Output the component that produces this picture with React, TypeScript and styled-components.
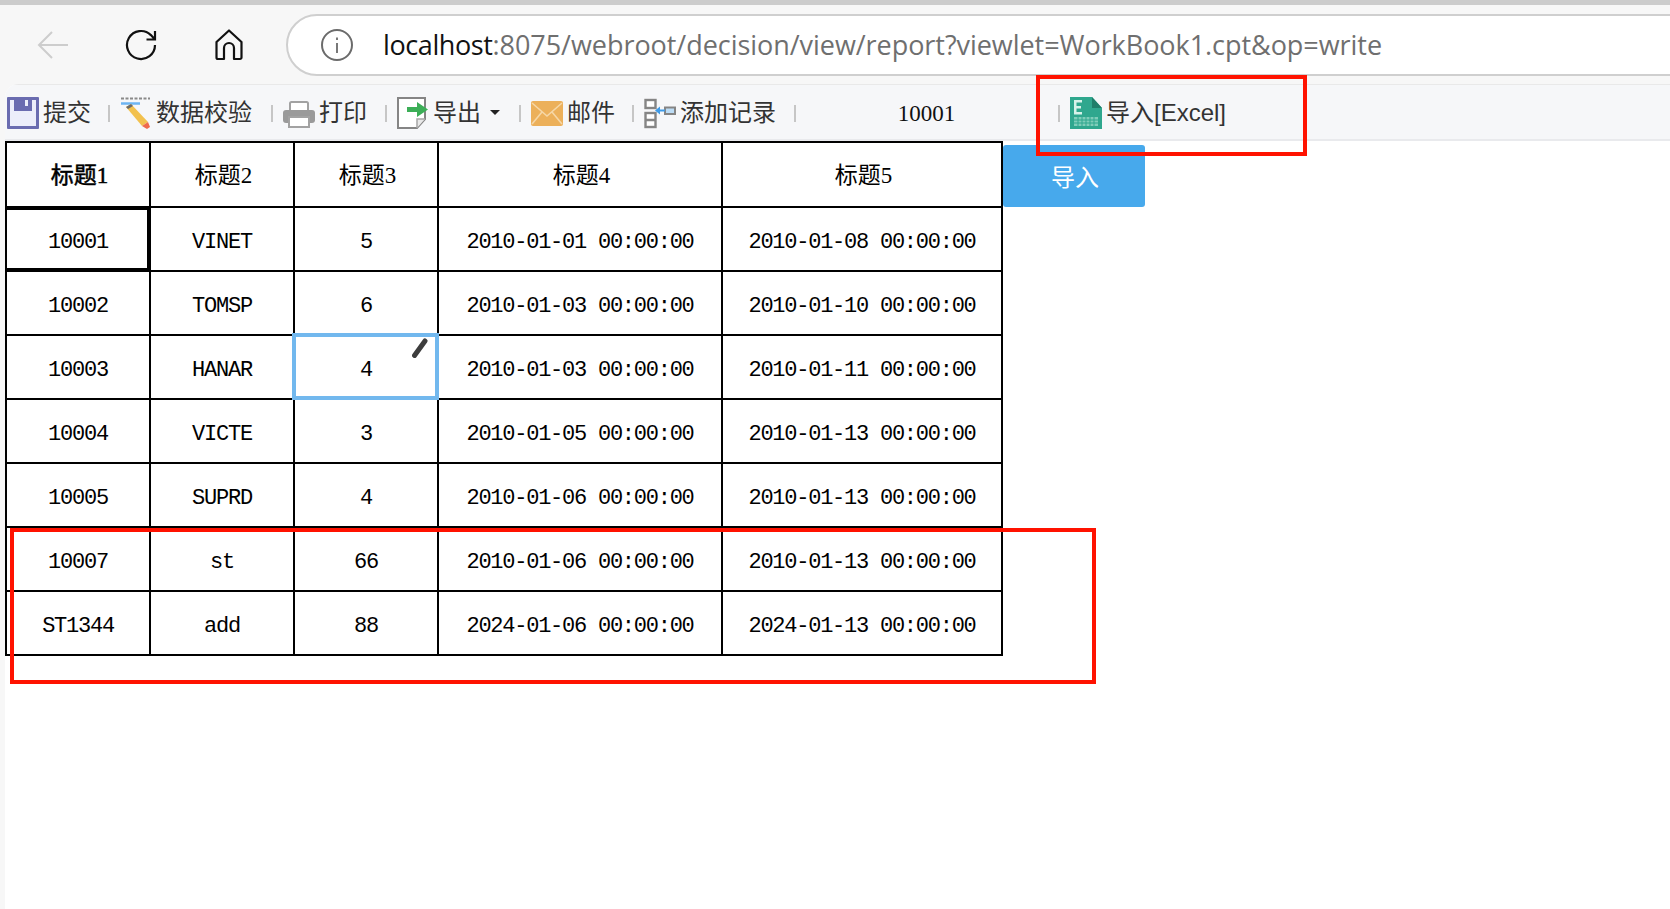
import React from "react";
import styled, { createGlobalStyle } from "styled-components";

const Global = createGlobalStyle`
  html, body { margin: 0; padding: 0; background: #fff; }
  body { font-family: "Liberation Sans", "Noto Sans CJK SC", sans-serif; }
  * { box-sizing: border-box; }
`;

const Page = styled.div`
  position: relative;
  width: 1670px;
  height: 909px;
  overflow: hidden;
  background: #f7f7f7;
  display: flex;
  flex-direction: column;
`;
const TopStrip = styled.div`
  height: 5px;
  background: #cccccc;
  flex: none;
`;
const NavBar = styled.div`
  height: 79px;
  flex: none;
  display: flex;
  align-items: center;
  padding: 9px 0 8px 37px;
  background: #f7f7f7;
`;
const NavIcon = styled.svg<{ $gap: number }>`
  flex: none;
  margin-right: ${(p) => p.$gap}px;
  display: block;
`;
const AddressBar = styled.div`
  flex: none;
  width: 1500px;
  height: 62px;
  display: flex;
  align-items: center;
  padding-left: 33px;
  gap: 30px;
  background: #fff;
  border: 2px solid #cfcfcf;
  border-radius: 31px 0 0 31px;
`;
const Url = styled.div`
  font-family: "Open Sans", sans-serif;
  font-size: 27px;
  color: #6f6f6f;
  white-space: nowrap;
  letter-spacing: -0.05px;
  margin-top: -2px;
`;
const Host = styled.span`
  color: #111;
  letter-spacing: -0.4px;
`;
const Frame = styled.div`
  flex: 1;
  margin-left: 5px;
  background: #fff;
  border-top-left-radius: 14px;
  overflow: hidden;
  display: flex;
  flex-direction: column;
`;
const Toolbar = styled.div`
  flex: none;
  height: 57px;
  display: flex;
  align-items: center;
  padding: 1px 0 0 2px;
  background: #f6f7f9;
  border-top: 1px solid #e9e9e9;
  border-bottom: 2px solid #e9eaed;
  color: #333;
  font-size: 24px;
`;
const ToolItem = styled.div`
  display: flex;
  align-items: center;
  gap: 4px;
  white-space: nowrap;
  flex: none;
`;
const ToolLabel = styled.span`
  line-height: 32px;
`;
const Sep = styled.i<{ $extra?: number }>`
  flex: none;
  display: block;
  width: 2px;
  height: 17px;
  margin: 1px 10px 0 ${(p) => 17 + (p.$extra ?? 0)}px;
  background: #c6c6c6;
`;
const Caret = styled.i`
  display: block;
  margin-left: 5px;
  width: 0;
  height: 0;
  border-left: 5px solid transparent;
  border-right: 5px solid transparent;
  border-top: 5px solid #222;
`;
const ToolValue = styled.div`
  flex: none;
  width: 261px;
  margin-left: -10px;
  margin-right: -17px;
  padding-top: 2px;
  text-align: center;
  font-family: "Liberation Serif", serif;
  font-size: 23px;
  color: #111;
`;
const Content = styled.div`
  flex: 1;
  display: flex;
  align-items: flex-start;
  background: #fff;
`;
const Sheet = styled.table`
  flex: none;
  table-layout: fixed;
  width: 996px;
  border-collapse: collapse;
  font-family: "Liberation Mono", "Noto Sans CJK SC", monospace;
  font-size: 22px;
  letter-spacing: -1.25px;
  color: #000;
`;
const Head = styled.th<{ $active?: boolean }>`
  height: 65px;
  padding: 0 0 4px 3px;
  border: 2px solid #000;
  text-align: center;
  font-family: "Liberation Serif", "Noto Sans CJK SC", serif;
  font-size: 23px;
  letter-spacing: 0;
  font-weight: 400;
  -webkit-text-stroke: ${(p) => (p.$active ? "0.5px #000" : "0")};
`;
const Cell = styled.td`
  position: relative;
  height: 64px;
  padding: 6px 0 0;
  border: 2px solid #000;
  text-align: center;
  white-space: pre;
`;
const CurrentMark = styled.span`
  position: absolute;
  left: -1px;
  top: -2px;
  right: -2px;
  bottom: -2px;
  border-top: 4px solid #000;
  border-right: 4px solid #000;
  border-bottom: 4px solid #000;
`;
const EditMark = styled.span`
  position: absolute;
  left: -3px;
  top: -3px;
  right: -2px;
  bottom: -2px;
  border: 4px solid #72b8ee;
`;
const Pencil = styled.svg`
  position: absolute;
  right: 6px;
  top: -1px;
  filter: blur(0.5px);
`;
const ImportButton = styled.button`
  flex: none;
  width: 142px;
  height: 62px;
  margin: 4px 0 0 0;
  padding: 0 0 2px 2px;
  border: none;
  border-radius: 3px;
  background: #47a9ec;
  color: #fff;
  font-family: "Noto Sans CJK SC", sans-serif;
  font-size: 24px;
`;
const Annotation = styled.div<{ $w: number }>`
  position: absolute;
  border: ${(p) => p.$w}px solid #ff1200;
  pointer-events: none;
`;
const TopNote = styled(Annotation)`
  left: 1036px;
  top: 75px;
  width: 271px;
  height: 81px;
`;
const RowNote = styled(Annotation)`
  left: 10px;
  top: 528px;
  width: 1086px;
  height: 156px;
`;

const SaveIcon = () => (
  <svg width="32" height="32" viewBox="0 0 32 32">
    <rect width="32" height="32" rx="1" fill="#6a6cb0" />
    <rect x="3" y="3" width="26" height="26" fill="#eceefa" />
    <rect x="7" y="0" width="18" height="14" fill="#6a6cb0" />
    <rect x="18" y="3" width="3" height="6" fill="#eceefa" />
  </svg>
);
const CheckIcon = () => (
  <svg width="32" height="32" viewBox="0 0 32 32">
    <path d="M1 1.5h29" stroke="#8a8a8a" strokeWidth="2" strokeDasharray="3 1.5" />
    <path d="M1 6.5h19" stroke="#6db5f2" strokeWidth="2.4" />
    <path d="M6 10l5-3 17 18-6 4z" fill="#f2c14e" />
    <path d="M6 10l5-3 2 2-5 3z" fill="#6b6b6b" />
    <path d="M22 29l6-4 2 5-3 2z" fill="#ef6a4c" />
  </svg>
);
const PrintIcon = () => (
  <svg width="32" height="32" viewBox="0 0 32 32">
    <rect x="7" y="5" width="18" height="10" rx="1.5" fill="#fff" stroke="#a2a2a2" strokeWidth="2" />
    <rect x="0" y="13" width="32" height="13" rx="3" fill="#9a9a9a" />
    <rect x="6" y="20" width="20" height="10" fill="#fff" stroke="#a2a2a2" strokeWidth="2" />
  </svg>
);
const ExportIcon = () => (
  <svg width="32" height="32" viewBox="0 0 32 32">
    <path d="M1 1h27v21l-8 9H1z" fill="#fff" stroke="#858585" strokeWidth="2" />
    <path d="M20 31v-9h8" fill="#e9e9e9" stroke="#a5a5a5" strokeWidth="1.5" />
    <path d="M10 10h10V5l11 7.5L20 20v-5H10z" fill="#3cae57" />
  </svg>
);
const MailIcon = () => (
  <svg width="32" height="32" viewBox="0 0 32 32">
    <rect x="0" y="4" width="32" height="25" rx="2" fill="#ecb05a" />
    <path d="M1 6l15 13L31 6M1 27l10-12M31 27L21 15" fill="none" stroke="#f6d7a6" strokeWidth="1.6" />
  </svg>
);
const AddIcon = () => (
  <svg width="32" height="32" viewBox="0 0 32 32">
    <rect x="1.500" y="3" width="10" height="8" fill="#fff" stroke="#858585" strokeWidth="2.400" />
    <rect x="1.500" y="16" width="10" height="14" fill="#fff" stroke="#858585" strokeWidth="2.400" />
    <path d="M1.500 23h10" stroke="#858585" strokeWidth="2.400" />
    <rect x="21" y="10.500" width="10" height="6.500" fill="#bcdcf5" stroke="#858585" strokeWidth="2" />
    <path d="M21 12.500h-5v-3l-5 4 5 4v-3h5z" fill="#3f9be8" />
  </svg>
);
const ExcelIcon = () => (
  <svg width="32" height="32" viewBox="0 0 32 32">
    <path d="M0 0h22l10 11v21H0z" fill="#2fa78e" />
    <path d="M22 0v11h10z" fill="#1f7e6a" />
    <path d="M4 3h8v2.500H6.500v3.500H11v2.400H6.500V15H12v2.500H4z" fill="#d7f2ea" />
    <rect x="4" y="20" width="24" height="9" fill="#7fcdb9" />
    <path d="M8 20v9M12 20v9M16 20v9M20 20v9M24 20v9M4 23h24M4 26h24" stroke="#2fa78e" strokeWidth="1" />
  </svg>
);

const rows = [
  ["10001", "VINET", "5", "2010-01-01 00:00:00", "2010-01-08 00:00:00"],
  ["10002", "TOMSP", "6", "2010-01-03 00:00:00", "2010-01-10 00:00:00"],
  ["10003", "HANAR", "4", "2010-01-03 00:00:00", "2010-01-11 00:00:00"],
  ["10004", "VICTE", "3", "2010-01-05 00:00:00", "2010-01-13 00:00:00"],
  ["10005", "SUPRD", "4", "2010-01-06 00:00:00", "2010-01-13 00:00:00"],
  ["10007", "st", "66", "2010-01-06 00:00:00", "2010-01-13 00:00:00"],
  ["ST1344", "add", "88", "2024-01-06 00:00:00", "2024-01-13 00:00:00"],
];
const widths = [144, 144, 144, 284, 280];

export default function App() {
  return (
    <Page>
      <Global />
      <TopStrip />
      <NavBar>
        <NavIcon $gap={56} width="32" height="32" viewBox="0 0 32 32" fill="none" stroke="#cdcdcd" strokeWidth="2">
          <path d="M31 16H2M15 3L2 16l13 13" />
        </NavIcon>
        <NavIcon $gap={58} width="32" height="32" viewBox="0 0 32 32" fill="none" stroke="#111" strokeWidth="2.200">
          <path d="M30 16a14 14 0 1 1-4.100-9.900L30 10.500M30 2v8.500h-8.500" />
        </NavIcon>
        <NavIcon $gap={43} width="28" height="32" viewBox="0 0 28 32" fill="none" stroke="#111" strokeWidth="2.200" strokeLinejoin="round">
          <path d="M1.500 13L14 1.500 26.500 13v15.500a1.500 1.500 0 0 1-1.500 1.500h-6V19a5 5 0 0 0-10 0v11H3a1.500 1.500 0 0 1-1.500-1.500z" />
        </NavIcon>
        <AddressBar>
          <svg width="32" height="32" viewBox="0 0 32 32" fill="none" stroke="#6b6b6b" strokeWidth="2">
            <circle cx="16" cy="16" r="15" />
            <path d="M16 14v10M16 8.500v2.500" strokeWidth="1.800" />
          </svg>
          <Url>
            <Host>localhost</Host>:8075/webroot/decision/view/report?viewlet=WorkBook1.cpt&amp;op=write
          </Url>
        </AddressBar>
      </NavBar>
      <Frame>
        <Toolbar>
          <ToolItem>
            <SaveIcon />
            <ToolLabel>提交</ToolLabel>
          </ToolItem>
          <Sep />
          <ToolItem>
            <CheckIcon />
            <ToolLabel>数据校验</ToolLabel>
          </ToolItem>
          <Sep $extra={2} />
          <ToolItem>
            <PrintIcon />
            <ToolLabel>打印</ToolLabel>
          </ToolItem>
          <Sep $extra={1} />
          <ToolItem>
            <ExportIcon />
            <ToolLabel>导出</ToolLabel>
            <Caret />
          </ToolItem>
          <Sep $extra={2} />
          <ToolItem>
            <MailIcon />
            <ToolLabel>邮件</ToolLabel>
          </ToolItem>
          <Sep />
          <ToolItem>
            <AddIcon />
            <ToolLabel>添加记录</ToolLabel>
          </ToolItem>
          <Sep $extra={1} />
          <ToolValue>10001</ToolValue>
          <Sep $extra={1} />
          <ToolItem>
            <ExcelIcon />
            <ToolLabel>导入[Excel]</ToolLabel>
          </ToolItem>
        </Toolbar>
        <Content>
          <Sheet>
            <colgroup>
              {widths.map((w, i) => (
                <col key={i} style={{ width: w }} />
              ))}
            </colgroup>
            <thead>
              <tr>
                {["标题1", "标题2", "标题3", "标题4", "标题5"].map((h, i) => (
                  <Head key={h} $active={i === 0}>
                    {h}
                  </Head>
                ))}
              </tr>
            </thead>
            <tbody>
              {rows.map((r, ri) => (
                <tr key={ri}>
                  {r.map((c, ci) => (
                    <Cell key={ci}>
                      {ri === 0 && ci === 0 && <CurrentMark />}
                      {ri === 2 && ci === 2 && (
                        <EditMark>
                          <Pencil width="18" height="22" viewBox="0 0 18 22">
                            <path d="M3.500 19.500L14 5" stroke="#3d3d3d" strokeWidth="5" strokeLinecap="round" />
                          </Pencil>
                        </EditMark>
                      )}
                      {c}
                    </Cell>
                  ))}
                </tr>
              ))}
            </tbody>
          </Sheet>
          <ImportButton>导入</ImportButton>
        </Content>
      </Frame>
      <TopNote $w={4} />
      <RowNote $w={4} />
    </Page>
  );
}
